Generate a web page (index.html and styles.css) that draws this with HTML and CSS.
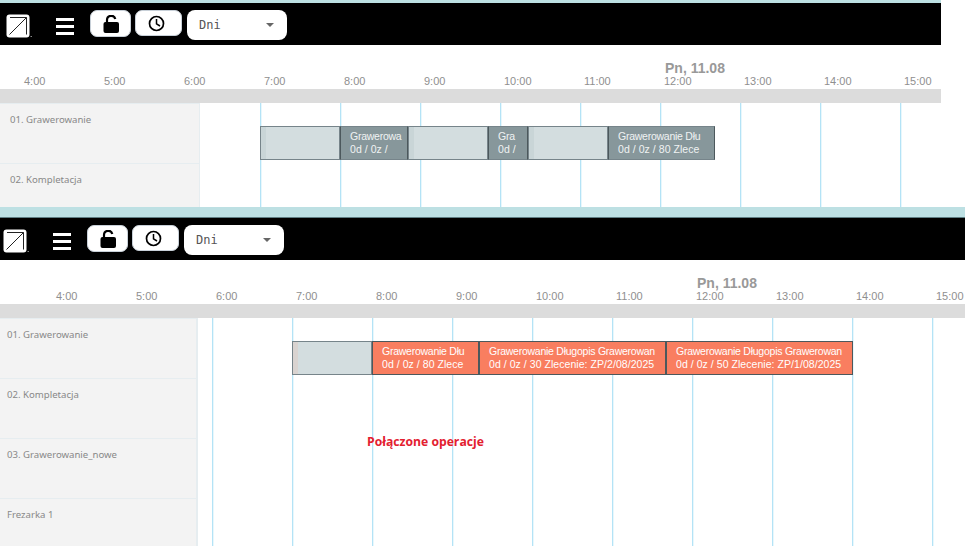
FILE: index.html
```html
<!DOCTYPE html>
<html lang="pl">
<head>
<meta charset="utf-8">
<title>Harmonogram</title>
<link rel="stylesheet" href="styles.css">
</head>
<body>
<section class="panel panel-a">
  <div class="toolbar">
    <div class="logo"><svg width="26" height="25" viewBox="0 0 26 25"><rect x="0.5" y="0.5" width="23" height="23" rx="3" fill="#fff"/><path d="M4 3.5H20.5V20.5M20.5 3.5L3.5 20.5" fill="none" stroke="#222" stroke-width="1"/><rect x="24.5" y="22" width="2" height="1" fill="#888"/></svg></div>
    <div class="burger"><span></span><span></span><span></span></div>
    <button class="tool lock"><svg width="17" height="18" viewBox="0 0 17 18"><path d="M4 8V5a4.2 4.2 0 0 1 8.3-.9" fill="none" stroke="#000" stroke-width="2.2"/><rect x="0.5" y="7" width="15.5" height="11" rx="2" fill="#000"/></svg></button>
    <button class="tool clock"><svg width="17" height="17" viewBox="0 0 17 17"><circle cx="8.5" cy="8.5" r="7" fill="none" stroke="#000" stroke-width="1.7"/><path d="M8.5 4V8.8L12 11" fill="none" stroke="#000" stroke-width="1.5"/></svg></button>
    <div class="select"><span>Dni</span><i></i></div>
  </div>
  <div class="axis">
    <div class="date">Pn, 11.08</div>
    <div class="hours"><span>4:00</span><span>5:00</span><span>6:00</span><span>7:00</span><span>8:00</span><span>9:00</span><span>10:00</span><span>11:00</span><span>12:00</span><span>13:00</span><span>14:00</span><span>15:00</span></div>
  </div>
  <div class="band"></div>
  <div class="rows">
    <div class="row">
      <div class="name">01. Grawerowanie</div>
      <div class="track">
        <div class="bar ghost" style="width:80px"></div>
        <div class="bar grey" style="width:68px"><span class="t">Grawerowa</span><br><span class="s">0d / 0z /</span></div>
        <div class="bar ghost" style="width:80px"></div>
        <div class="bar grey" style="width:40px"><span class="t">Gra</span><br><span class="s">0d /</span></div>
        <div class="bar ghost" style="width:80px"></div>
        <div class="bar grey" style="width:107px"><span class="t">Grawerowanie Dłu</span><br><span class="s">0d / 0z / 80 Zlece</span></div>
      </div>
    </div>
    <div class="row">
      <div class="name">02. Kompletacja</div>
      <div class="track"></div>
    </div>
  </div>
</section>
<div class="divider"></div>
<section class="panel panel-b">
  <div class="toolbar">
    <div class="logo"><svg width="26" height="25" viewBox="0 0 26 25"><rect x="0.5" y="0.5" width="23" height="23" rx="3" fill="#fff"/><path d="M4 3.5H20.5V20.5M20.5 3.5L3.5 20.5" fill="none" stroke="#222" stroke-width="1"/><rect x="24.5" y="22" width="2" height="1" fill="#888"/></svg></div>
    <div class="burger"><span></span><span></span><span></span></div>
    <button class="tool lock"><svg width="17" height="18" viewBox="0 0 17 18"><path d="M4 8V5a4.2 4.2 0 0 1 8.3-.9" fill="none" stroke="#000" stroke-width="2.2"/><rect x="0.5" y="7" width="15.5" height="11" rx="2" fill="#000"/></svg></button>
    <button class="tool clock"><svg width="17" height="17" viewBox="0 0 17 17"><circle cx="8.5" cy="8.5" r="7" fill="none" stroke="#000" stroke-width="1.7"/><path d="M8.5 4V8.8L12 11" fill="none" stroke="#000" stroke-width="1.5"/></svg></button>
    <div class="select"><span>Dni</span><i></i></div>
  </div>
  <div class="axis">
    <div class="date">Pn, 11.08</div>
    <div class="hours"><span>4:00</span><span>5:00</span><span>6:00</span><span>7:00</span><span>8:00</span><span>9:00</span><span>10:00</span><span>11:00</span><span>12:00</span><span>13:00</span><span>14:00</span><span>15:00</span></div>
  </div>
  <div class="band"></div>
  <div class="rows">
    <div class="row">
      <div class="name">01. Grawerowanie</div>
      <div class="track">
        <div class="bar ghost" style="width:80px"></div>
        <div class="bar orange" style="width:107px"><span class="t">Grawerowanie Dłu</span><br><span class="s">0d / 0z / 80 Zlece</span></div>
        <div class="bar orange" style="width:187px"><span class="t">Grawerowanie Długopis Grawerowan</span><br><span class="s">0d / 0z / 30 Zlecenie: ZP/2/08/2025</span></div>
        <div class="bar orange" style="width:187px"><span class="t">Grawerowanie Długopis Grawerowan</span><br><span class="s">0d / 0z / 50 Zlecenie: ZP/1/08/2025</span></div>
      </div>
    </div>
    <div class="row">
      <div class="name">02. Kompletacja</div>
      <div class="track"></div>
    </div>
    <div class="row">
      <div class="name">03. Grawerowanie_nowe</div>
      <div class="track"></div>
    </div>
    <div class="row">
      <div class="name">Frezarka 1</div>
      <div class="track"></div>
    </div>
    <div class="note">Połączone operacje</div>
  </div>
</section>
</body>
</html>
```
FILE: styles.css
```css
* { box-sizing: border-box; }
html, body { margin: 0; padding: 0; }
body {
  width: 968px;
  height: 546px;
  overflow: hidden;
  background: #fff;
  font-family: "Liberation Sans", Arial, sans-serif;
}
.panel { overflow: hidden; }
.panel-a {
  width: 941px;
  height: 207px;
  border-top: 3px solid #bde0e3;
  --toolbar-pad: 6px;
  --hours-pad: 24px;
  --date-pad: 665px;
  --side: 200px;
  --grid-off: 60px;
}
.divider {
  width: 965px;
  height: 11px;
  background: #bde0e3;
  border-bottom: 1px solid #5f7f84;
}
.panel-b {
  width: 965px;
  height: 328px;
  --toolbar-pad: 3px;
  --hours-pad: 56px;
  --date-pad: 697px;
  --side: 198px;
  --grid-off: 14px;
}

.toolbar {
  height: 42px;
  background: #000;
  display: flex;
  align-items: flex-start;
  padding-left: var(--toolbar-pad);
  padding-top: 7px;
}
.logo { width: 24px; height: 24px; margin-top: 4px; line-height: 0; }
.burger {
  width: 18px;
  margin: 8px 0 0 26px;
  display: flex;
  flex-direction: column;
  gap: 4px;
}
.burger span { display: block; height: 3px; background: #fff; }
.tool {
  height: 27px;
  padding: 0;
  background: #fff;
  border: 1px solid #c8d0d8;
  border-radius: 7px;
  display: flex;
  line-height: 0;
}
.lock { width: 41px; margin-left: 16px; padding: 4px 0 0 12px; }
.clock { width: 47px; height: 26px; margin-left: 4px; padding: 4px 0 0 12px; }
.select {
  width: 100px;
  height: 30px;
  margin-left: 5px;
  background: #fff;
  border-radius: 8px;
  display: flex;
  align-items: center;
  justify-content: space-between;
  padding: 0 13px 0 12px;
  font: 12px "DejaVu Sans Mono", monospace;
  color: #555;
}
.select i {
  width: 0;
  height: 0;
  border-left: 4px solid transparent;
  border-right: 4px solid transparent;
  border-top: 4px solid #666;
}

.axis { height: 44px; padding-top: 15px; }
.date {
  height: 15px;
  line-height: 16px;
  padding-left: var(--date-pad);
  font-size: 14px;
  font-weight: bold;
  color: #999;
  white-space: nowrap;
}
.hours {
  display: flex;
  padding-left: var(--hours-pad);
  font-size: 11px;
  line-height: 13px;
  color: #8f8f8f;
}
.hours span { flex: 0 0 80px; }
.band { height: 14px; background: #dcdcdc; }

.rows {
  position: relative;
  background-color: #fff;
  height: 300px;
}
.row { display: flex; height: 60px; }
.name {
  flex: 0 0 var(--side);
  padding: 9px 0 0 10px;
  background: #f3f3f3;
  border-right: 1px solid #e6edf0;
  border-top: 1px solid #e6edf0;
  font: 9.6px/13px "Noto Sans", sans-serif;
  color: #888;
}
.panel-b .name { padding-left: 7px; border-right-width: 2px; }
.track {
  flex: 1;
  display: flex;
  align-items: flex-start;
  padding: 23px 0 0 var(--grid-off);
  background-image: linear-gradient(to right, #b4e3f6 1px, #e8f7fc 1px, #e8f7fc 2px, transparent 2px);
  background-size: 80px 100%;
  background-position: var(--grid-off) 0;
  background-repeat: repeat-x;
}
.panel-b .track { padding-left: calc(var(--grid-off) + 80px); }
.bar {
  flex: none;
  height: 34px;
  padding: 3px 0 0 9px;
  border: 1px solid #4c585c;
  border-width: 1.5px 1px;
  overflow: hidden;
  white-space: nowrap;
  font-size: 10.5px;
  line-height: 13px;
  color: #fff;
}
.t { letter-spacing: -0.25px; }
.s { letter-spacing: 0.05px; }
.ghost {
  background: linear-gradient(to right, #c9d5d7 5px, #d3dddf 5px);
  border-color: #76848a;
}
.panel-b .ghost { background: linear-gradient(to right, #d9d3d0 5px, #d3dddf 5px); }
.grey { background: #87979b; border-color: #76848a #4c585c; color: #f0f3f3; }
.orange { background: #f97e60; border-color: #4c585c; }
.note {
  position: absolute;
  left: 367px;
  top: 115px;
  font: bold 12.2px/18px "Open Sans", sans-serif;
  color: #e3202f;
  white-space: nowrap;
}
```
